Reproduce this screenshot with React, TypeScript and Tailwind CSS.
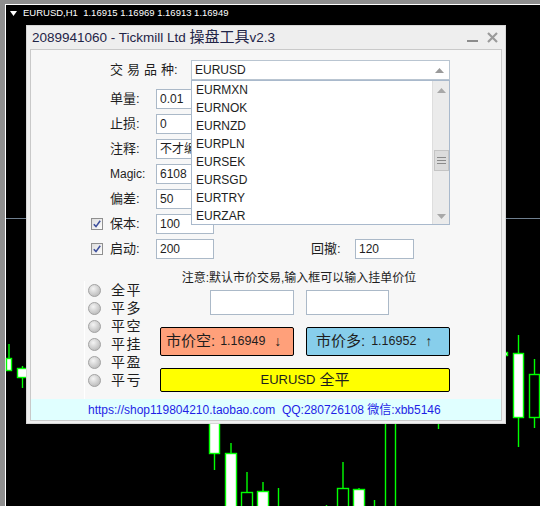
import React from 'react';

const GREEN = '#00ff00';

type Candle = { x: number; w: number; top: number; bottom: number; wickTop: number; wickBottom: number; filled: boolean };

// candles visible around the dialog (page coordinates)
const candles: Candle[] = [
  { x: 6.5, w: 5, top: 358.5, bottom: 370.5, wickTop: 344, wickBottom: 370, filled: true },
  { x: 17.5, w: 10, top: 368.5, bottom: 377.5, wickTop: 366, wickBottom: 388, filled: true },
  { x: 497.5, w: 10, top: 352.5, bottom: 355.5, wickTop: 352, wickBottom: 356, filled: true },
  { x: 513.5, w: 10, top: 353.5, bottom: 417.5, wickTop: 335, wickBottom: 447, filled: true },
  { x: 529.5, w: 10, top: 374.5, bottom: 417.5, wickTop: 359, wickBottom: 428, filled: false },
  { x: 209.5, w: 10, top: 400, bottom: 453.5, wickTop: 400, wickBottom: 470, filled: true },
  { x: 225.5, w: 11, top: 453.5, bottom: 512, wickTop: 443, wickBottom: 512, filled: true },
  { x: 241.5, w: 11, top: 492.5, bottom: 512, wickTop: 472, wickBottom: 512, filled: false },
  { x: 257.5, w: 11, top: 491.5, bottom: 512, wickTop: 482, wickBottom: 512, filled: true },
  { x: 337.5, w: 11, top: 488.5, bottom: 512, wickTop: 462, wickBottom: 512, filled: false },
  { x: 353.5, w: 11, top: 489.5, bottom: 512, wickTop: 488, wickBottom: 512, filled: true },
];

const wicks: [number, number, number][] = [
  [278.5, 488, 506],
  [326.5, 505, 506],
  [374.5, 500, 506],
  [385.5, 424, 506],
  [395.5, 424, 506],
  [438.5, 424, 429],
];

function Chart() {
  return (
    <svg className="absolute left-0 top-0" width={540} height={506}>
      <line x1={6} y1={218.5} x2={540} y2={218.5} stroke="#6f7f8f" strokeWidth={1} />
      {candles.map((c, i) => (
        <g key={i}>
          <line x1={c.x + c.w / 2} y1={c.wickTop} x2={c.x + c.w / 2} y2={c.wickBottom} stroke={GREEN} strokeWidth={1.4} />
          <rect x={c.x} y={c.top} width={c.w} height={c.bottom - c.top} fill={c.filled ? '#ffffff' : '#000000'} stroke={GREEN} strokeWidth={1.4} />
        </g>
      ))}
      {wicks.map(([x, y1, y2], i) => (
        <line key={i} x1={x} y1={y1} x2={x} y2={y2} stroke={GREEN} strokeWidth={1.4} />
      ))}
    </svg>
  );
}

function Checkbox() {
  return (
    <svg width={12} height={12} viewBox="0 0 12 12">
      <defs>
        <linearGradient id="cb" x1="0" y1="0" x2="1" y2="1">
          <stop offset="0" stopColor="#dcdcdc" />
          <stop offset="1" stopColor="#ffffff" />
        </linearGradient>
      </defs>
      <rect x={0.5} y={0.5} width={11} height={11} fill="url(#cb)" stroke="#8f8f8f" />
      <path d="M2.8 6.2 L5 8.6 L9.2 2.8" fill="none" stroke="#3d4f9c" strokeWidth={1.6} />
    </svg>
  );
}

function Radio() {
  return (
    <svg width={13} height={13} viewBox="0 0 13 13">
      <defs>
        <radialGradient id="rd" cx="0.4" cy="0.35" r="0.7">
          <stop offset="0" stopColor="#f4f4f4" />
          <stop offset="1" stopColor="#b8b8b8" />
        </radialGradient>
      </defs>
      <circle cx={6.5} cy={6.5} r={6} fill="url(#rd)" stroke="#a3a3a3" />
    </svg>
  );
}

function Field({ value, w = 'w-[58px]' }: { value: string; w?: string }) {
  return (
    <div className={`${w} h-[20px] border border-[#abb9c8] bg-white pl-[3px] text-[12px] leading-[18px] text-[#1e1e1e] overflow-hidden whitespace-nowrap`}>
      {value}
    </div>
  );
}

const symbols = ['EURMXN', 'EURNOK', 'EURNZD', 'EURPLN', 'EURSEK', 'EURSGD', 'EURTRY', 'EURZAR'];

const rows = [
  { label: '单量:', value: '0.01' },
  { label: '止损:', value: '0' },
  { label: '注释:', value: '不才编' },
  { label: 'Magic:', value: '6108' },
  { label: '偏差:', value: '50' },
  { label: '保本:', value: '100', check: true },
];

const closers = ['全平', '平多', '平空', '平挂', '平盈', '平亏'];

function Dropdown() {
  return (
    <div className="absolute left-0 top-[20px] w-[259px] h-[145px] border border-[#a9b9cc] bg-white flex">
      <div className="flex-1 flex flex-col">
        {symbols.map((s) => (
          <div key={s} className="h-[18px] pl-[4px] text-[12px] leading-[19px] text-[#1e1e1e]">
            {s}
          </div>
        ))}
      </div>
      <div className="w-[17px] bg-[#ebebeb] border-l border-[#dedede] flex flex-col items-center">
        <svg width={9} height={5} className="mt-[7px]">
          <path d="M0 5 L4.5 0 L9 5 Z" fill="#a8a8a8" />
        </svg>
        <div className="mt-[57px] w-[15px] h-[21px] bg-[#dcdcdc] border border-[#c4c4c4] flex flex-col items-center justify-center gap-[2px]">
          <div className="w-[9px] h-px bg-[#8a8a8a]" />
          <div className="w-[9px] h-px bg-[#8a8a8a]" />
          <div className="w-[9px] h-px bg-[#8a8a8a]" />
        </div>
        <svg width={9} height={5} className="mt-[43px]">
          <path d="M0 0 L4.5 5 L9 0 Z" fill="#a8a8a8" />
        </svg>
      </div>
    </div>
  );
}

export default function App() {
  return (
    <div className="relative w-[540px] h-[506px] bg-[#8e8e8e] pl-[5px] pt-[4px] overflow-hidden font-['Liberation_Sans','Noto_Sans_CJK_SC',sans-serif]">
      <div className="h-full border-l border-t border-white bg-black" />
      <Chart />

      {/* chart caption */}
      <div className="absolute left-[10px] top-[7px] flex items-center gap-[6px] text-white text-[9.5px] leading-[12px] whitespace-pre">
        <svg width={7} height={5}>
          <path d="M0 0 L7 0 L3.5 5 Z" fill="#ffffff" />
        </svg>
        <span>EURUSD,H1  1.16915 1.16969 1.16913 1.16949</span>
      </div>

      {/* dialog window */}
      <div className="absolute left-[26px] top-[25px] w-[480px] h-[399px] border border-[#d6d6d6] bg-[#eeeeee] flex flex-col">
        <div className="h-[23px] flex items-center justify-between pl-[5px] pr-[7px]">
          <div className="text-[13.5px] text-[#1f2447] whitespace-pre">
            2089941060 - Tickmill Ltd <span className="text-[15px]">操盘工具</span>v2.3
          </div>
          <div className="flex items-center gap-[9px]">
            <svg width={11} height={10}>
              <line x1={0} y1={8} x2={11} y2={8} stroke="#8c8c8c" strokeWidth={2} />
            </svg>
            <svg width={11} height={11}>
              <path d="M1 1 L10 10 M10 1 L1 10" stroke="#9a9a9a" strokeWidth={2.2} />
            </svg>
          </div>
        </div>

        <div className="flex-1 mx-[3px] mb-[2px] border border-[#c9c9c9] bg-[#f7f7f7] flex flex-col">
          <div className="flex-1 flex flex-col pt-[10px] text-[#1e1e1e]">
            {/* symbol selector */}
            <div className="h-[20px] flex items-center">
              <div className="ml-[79px] w-[81px] text-[13px] whitespace-nowrap">
                <span className="tracking-[4px]">交易品</span>种:
              </div>
              <div className="relative z-10">
                <div className="w-[259px] h-[20px] border border-[#b9c5d1] bg-white flex items-center justify-between pl-[3px] pr-[5px]">
                  <span className="text-[12px] leading-[18px]">EURUSD</span>
                  <svg width={9} height={5}>
                    <path d="M0 5 L4.5 0 L9 5 Z" fill="#9a9a9a" />
                  </svg>
                </div>
                <Dropdown />
              </div>
            </div>

            <div className="mt-[9px] flex flex-col gap-[5px]">
              {rows.map((r) => (
                <div key={r.label} className="h-[20px] flex items-center pl-[60px]">
                  <div className="w-[19px] flex items-center">{r.check && <Checkbox />}</div>
                  <div className={`w-[46px] ${r.label === 'Magic:' ? 'text-[12px]' : 'text-[13px]'}`}>{r.label}</div>
                  <Field value={r.value} />
                </div>
              ))}
              <div className="h-[20px] flex items-center pl-[60px]">
                <div className="w-[19px] flex items-center">
                  <Checkbox />
                </div>
                <div className="w-[46px] text-[13px]">启动:</div>
                <Field value="200" />
                <div className="ml-[97px] w-[44px] text-[13px]">回撤:</div>
                <Field value="120" w="w-[59px]" />
              </div>
            </div>

            {/* lower section */}
            <div className="flex-1 flex mt-[11px]">
              <div className="ml-[53px] w-[76px] mt-[11px] border-l border-white pl-[3px] flex flex-col">
                {closers.map((c) => (
                  <div key={c} className="h-[18px] flex items-center">
                    <Radio />
                    <span className="ml-[10px] text-[14px] tracking-[1.5px] leading-[18px]">{c}</span>
                  </div>
                ))}
              </div>

              <div className="w-[290px] flex flex-col">
                <div className="h-[16px] pr-[12px] text-center text-[12px] leading-[16px] whitespace-nowrap">
                  注意:默认市价交易,输入框可以输入挂单价位
                </div>
                <div className="mt-[4px] flex gap-[12px] pl-[50px]">
                  <div className="w-[84px] h-[25px] border border-[#abb9c8] bg-white" />
                  <div className="w-[83px] h-[25px] border border-[#abb9c8] bg-white" />
                </div>
                <div className="mt-[12px] flex gap-[12px]">
                  <div className="w-[134px] h-[29px] border border-black rounded-[2px] bg-[#ffa07a] flex items-center pl-[5px] whitespace-pre">
                    <span className="text-[15px]">市价空:</span>
                    <span className="ml-[5px] text-[12.5px]">1.16949</span>
                    <span className="ml-[9px] text-[14px]">↓</span>
                  </div>
                  <div className="w-[144px] h-[29px] border border-black rounded-[2px] bg-[#87ceeb] flex items-center pl-[9px] whitespace-pre">
                    <span className="text-[15px]">市价多:</span>
                    <span className="ml-[6px] text-[12.5px]">1.16952</span>
                    <span className="ml-[9px] text-[14px]">↑</span>
                  </div>
                </div>
                <div className="mt-[12px] w-[290px] h-[24px] border border-black rounded-[2px] bg-[#ffff00] flex items-center justify-center text-[13px]">
                  EURUSD <span className="ml-[4px] text-[15px]">全平</span>
                </div>
              </div>
            </div>
          </div>

          <div className="h-[21px] bg-[#e0ffff] pl-[57px] flex items-center text-[12px] text-[#1f1fe6] whitespace-pre">
            https://shop119804210.taobao.com  QQ:280726108 微信:xbb5146
          </div>
        </div>
      </div>
    </div>
  );
}
